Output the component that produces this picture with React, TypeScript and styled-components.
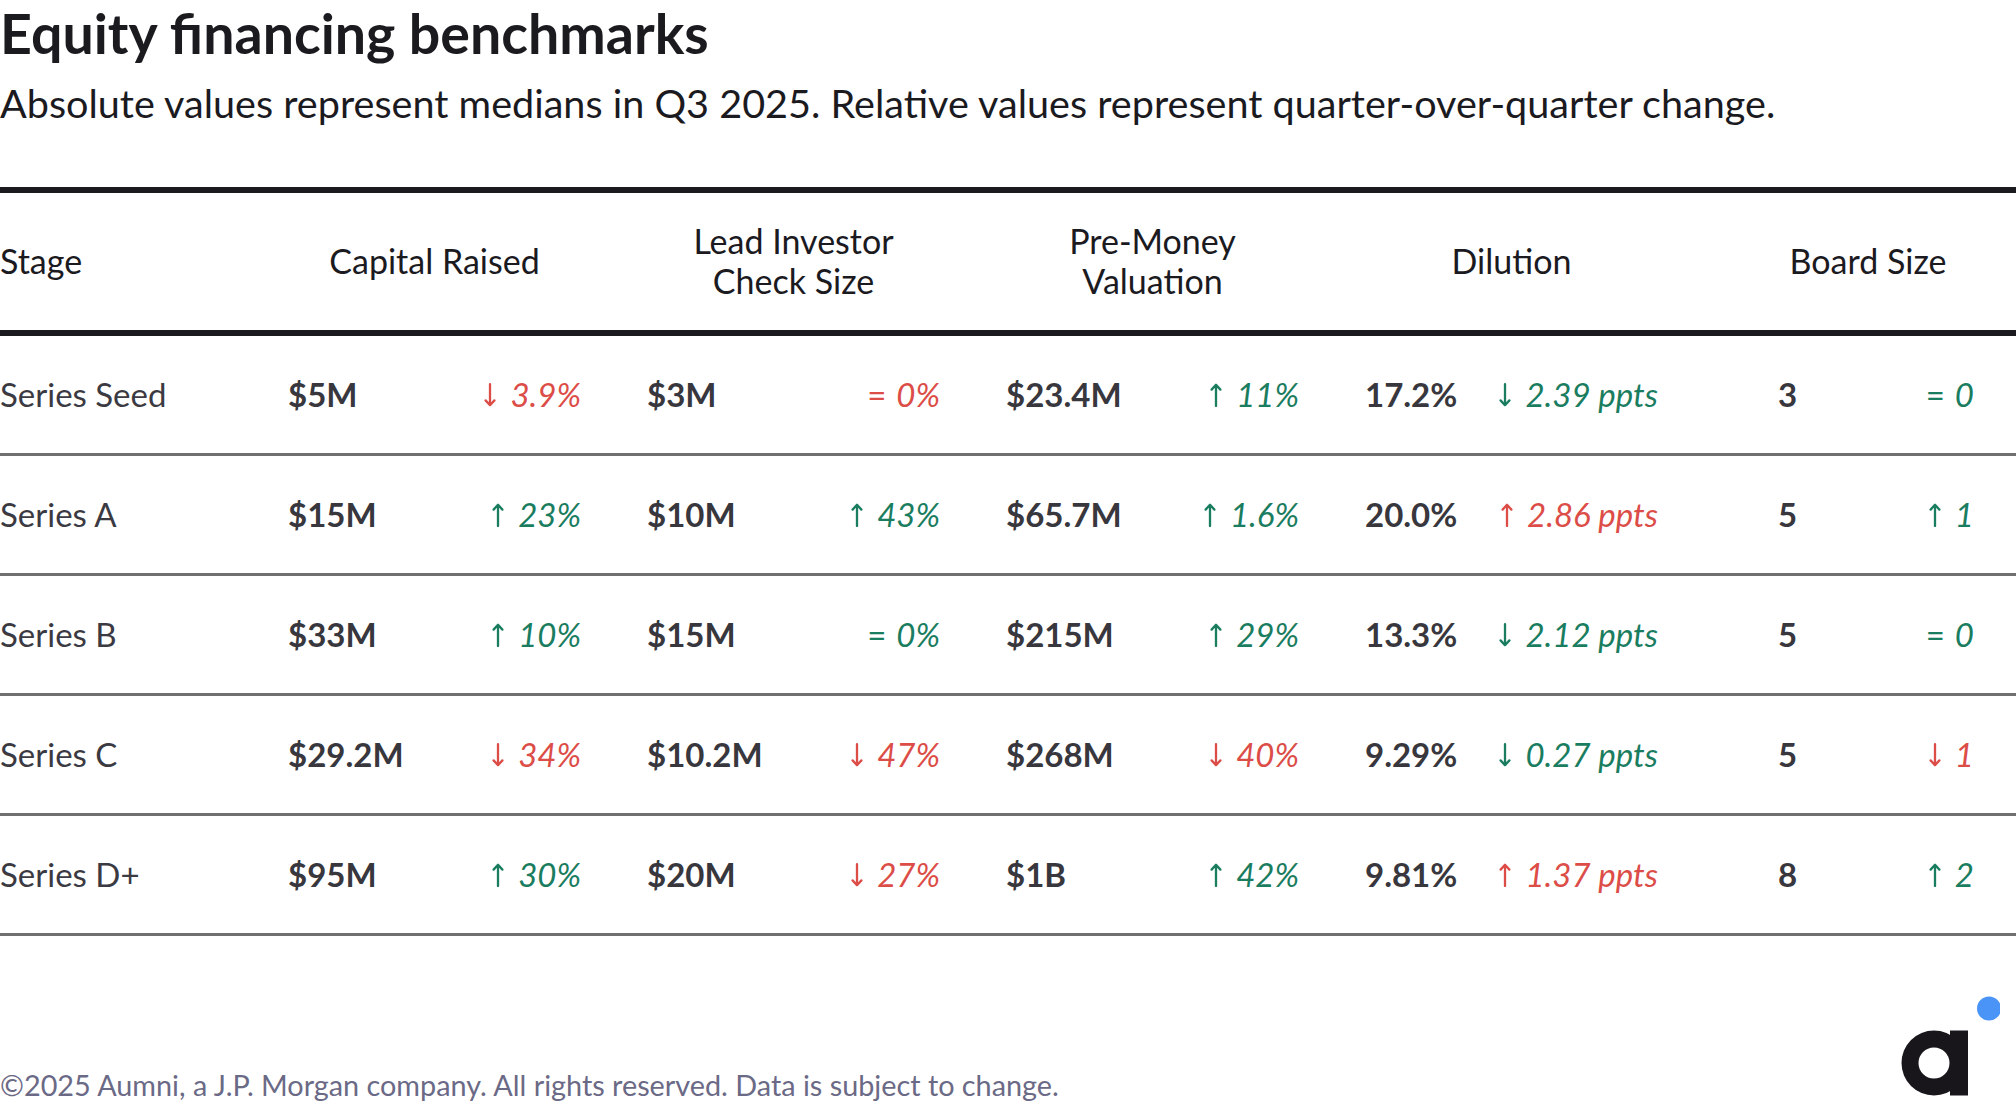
import styled, { createGlobalStyle } from "styled-components"

const GlobalStyle = createGlobalStyle`
  html, body {
    margin: 0;
    padding: 0;
    background: #ffffff;
  }
  body {
    font-family: Lato, "Noto Sans", "Liberation Sans", sans-serif;
    color: #1b1a1f;
  }
`

type Dir = "up" | "down" | "flat"
type Tone = "good" | "bad"

interface Change {
  dir: Dir
  tone: Tone
  text: string
}

interface Row {
  stage: string
  capital: [string, Change]
  check: [string, Change]
  valuation: [string, Change]
  dilution: [string, Change]
  board: [string, Change]
}

const up = (text: string, tone: Tone = "good"): Change => ({ dir: "up", tone, text })
const down = (text: string, tone: Tone = "bad"): Change => ({ dir: "down", tone, text })
const flat = (text: string, tone: Tone = "good"): Change => ({ dir: "flat", tone, text })

const rows: Row[] = [
  {
    stage: "Series Seed",
    capital: ["$5M", down("3.9%")],
    check: ["$3M", flat("0%", "bad")],
    valuation: ["$23.4M", up("11%")],
    dilution: ["17.2%", down("2.39 ppts", "good")],
    board: ["3", flat("0")],
  },
  {
    stage: "Series A",
    capital: ["$15M", up("23%")],
    check: ["$10M", up("43%")],
    valuation: ["$65.7M", up("1.6%")],
    dilution: ["20.0%", up("2.86 ppts", "bad")],
    board: ["5", up("1")],
  },
  {
    stage: "Series B",
    capital: ["$33M", up("10%")],
    check: ["$15M", flat("0%")],
    valuation: ["$215M", up("29%")],
    dilution: ["13.3%", down("2.12 ppts", "good")],
    board: ["5", flat("0")],
  },
  {
    stage: "Series C",
    capital: ["$29.2M", down("34%")],
    check: ["$10.2M", down("47%")],
    valuation: ["$268M", down("40%")],
    dilution: ["9.29%", down("0.27 ppts", "good")],
    board: ["5", down("1")],
  },
  {
    stage: "Series D+",
    capital: ["$95M", up("30%")],
    check: ["$20M", down("27%")],
    valuation: ["$1B", up("42%")],
    dilution: ["9.81%", up("1.37 ppts", "bad")],
    board: ["8", up("2")],
  },
]

// thin arrow, cap-height tall, sitting on the baseline
const Arrow = ({ dir }: { dir: "up" | "down" }) => (
  <ArrowIcon viewBox="0 0 12 24" aria-hidden>
    {dir === "up" ? (
      <path d="M6 23V1.8M1.6 6.6L6 1.8L10.4 6.6" />
    ) : (
      <path d="M6 1.2V22.2M1.6 17.4L6 22.2L10.4 17.4" />
    )}
  </ArrowIcon>
)

function Delta({ change }: { change: Change }) {
  return (
    <DeltaText $tone={change.tone}>
      {change.dir === "flat" ? <Equals>=</Equals> : <Arrow dir={change.dir} />}
      <span>{change.text}</span>
    </DeltaText>
  )
}

export default function App() {
  return (
    <Page>
      <GlobalStyle />
      <Title>Equity financing benchmarks</Title>
      <Subtitle>
        Absolute values represent medians in Q3 2025. Relative values represent quarter-over-quarter change.
      </Subtitle>

      <Table>
        <HeaderRow>
          <HeadCell $align="left">Stage</HeadCell>
          <HeadCell>Capital Raised</HeadCell>
          <HeadCell>
            Lead Investor
            <br />
            Check Size
          </HeadCell>
          <HeadCell>
            Pre-Money
            <br />
            Valuation
          </HeadCell>
          <HeadCell>Dilution</HeadCell>
          <HeadCell $last>Board Size</HeadCell>
        </HeaderRow>

        {rows.map((r) => (
          <BodyRow key={r.stage}>
            <StageCell>{r.stage}</StageCell>
            {[r.capital, r.check, r.valuation, r.dilution].map(([value, change], i) => (
              <MetricCell key={i}>
                <Value>{value}</Value>
                <Delta change={change} />
              </MetricCell>
            ))}
            <MetricCell $last>
              <Value>{r.board[0]}</Value>
              <Delta change={r.board[1]} />
            </MetricCell>
          </BodyRow>
        ))}
      </Table>

      <Footer>
        <Copyright>©2025 Aumni, a J.P. Morgan company. All rights reserved. Data is subject to change.</Copyright>
        <Logo viewBox="0 0 100 100" aria-label="Aumni">
          <circle cx="34" cy="67" r="32.5" fill="#18161b" />
          <rect x="50" y="34.5" width="18" height="65" fill="#18161b" />
          <circle cx="34" cy="67" r="15.5" fill="#ffffff" />
          <circle cx="89" cy="12.5" r="12" fill="#4a94f8" />
        </Logo>
      </Footer>
    </Page>
  )
}

const Page = styled.main`
  width: 2016px;
  height: 1110px;
  box-sizing: border-box;
  display: flex;
  flex-direction: column;
  overflow: hidden;
`

const Title = styled.h1`
  margin: 0;
  font-size: 55.5px;
  line-height: 1.2;
  font-weight: 700;
  color: #1b1a1f;
`

const Subtitle = styled.p`
  margin: 14px 0 0;
  font-size: 39.6px;
  line-height: 43px;
  font-weight: 400;
  color: #1b1a1f;
`

const Table = styled.section`
  margin-top: 63px;
  border-top: 6px solid #1b1a1f;
`

const GRID = `288px repeat(4, 359px) 1fr`

const HeaderRow = styled.div`
  display: grid;
  grid-template-columns: ${GRID};
  height: 137px;
  align-items: center;
  border-bottom: 6px solid #1b1a1f;
`

const HeadCell = styled.div<{ $align?: "left"; $last?: boolean }>`
  font-size: 34px;
  line-height: 40px;
  color: #1b1a1f;
  text-align: ${(p) => (p.$align === "left" ? "left" : "center")};
  padding-right: ${(p) => (p.$align === "left" ? "0" : p.$last ? "42px" : "66px")};
  padding-left: ${(p) => (p.$last ? "38px" : "0")};
`

const BodyRow = styled.div`
  display: grid;
  grid-template-columns: ${GRID};
  height: 120px;
  box-sizing: border-box;
  align-items: center;
  border-bottom: 3px solid #707070;
`

const StageCell = styled.div`
  font-size: 33px;
  color: #3b3a42;
`

const MetricCell = styled.div<{ $last?: boolean }>`
  display: flex;
  justify-content: space-between;
  align-items: baseline;
  padding-right: ${(p) => (p.$last ? "42px" : "66px")};
  padding-left: ${(p) => (p.$last ? "54px" : "0")};
`

const Value = styled.span`
  font-size: 33px;
  font-weight: 700;
  color: #38373d;
`

const DeltaText = styled.span<{ $tone: Tone }>`
  display: inline-flex;
  align-items: baseline;
  font-size: 33px;
  font-style: italic;
  white-space: pre;
  color: ${(p) => (p.$tone === "good" ? "#1a7d5f" : "#dc4d48")};
`

const ArrowIcon = styled.svg`
  width: 12px;
  height: 24px;
  margin-right: 14px;
  fill: none;
  stroke: currentColor;
  stroke-width: 2.3;
  stroke-linecap: round;
  stroke-linejoin: round;
`

const Equals = styled.span`
  font-style: normal;
  margin-right: 10px;
`

const Footer = styled.footer`
  margin-top: auto;
  display: flex;
  justify-content: space-between;
  align-items: flex-end;
  padding-right: 16px;
`

const Copyright = styled.p`
  margin: 0 0 8px;
  font-size: 28.8px;
  line-height: 34px;
  color: #6b6a86;
`

const Logo = styled.svg`
  width: 100px;
  height: 100px;
  margin-bottom: 14px;
`
